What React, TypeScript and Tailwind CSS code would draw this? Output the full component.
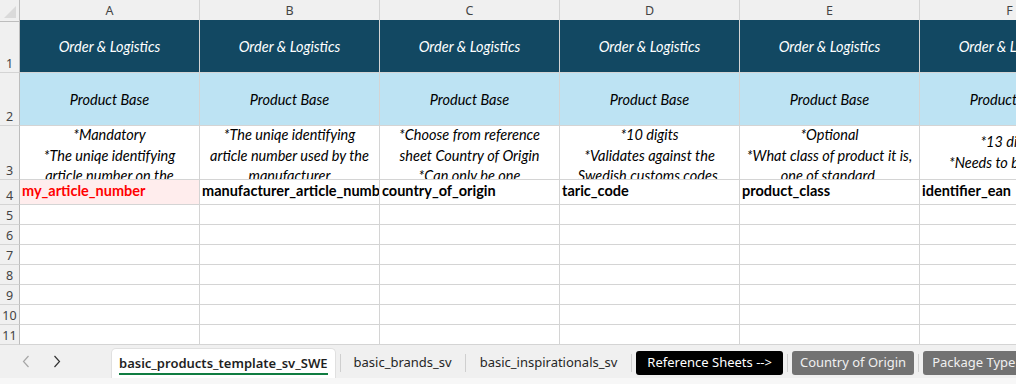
import type { ReactNode } from "react";

const cols = ["A", "B", "C", "D", "E", "F"];

const notes: { lines: string[]; top?: boolean }[] = [
  { lines: ["*Mandatory", "*The uniqe identifying", "article number on the", "supplier side"] },
  { lines: ["*The uniqe identifying", "article number used by the", "manufacturer"] },
  { lines: ["*Choose from reference", "sheet Country of Origin", "*Can only be one"] },
  { lines: ["*10 digits", "*Validates against the", "Swedish customs codes."] },
  { lines: ["*Optional", "*What class of product it is,", "one of standard."] },
  { lines: ["*13 digits", "*Needs to be unique"], top: true },
];

const fields = [
  "my_article_number",
  "manufacturer_article_number",
  "country_of_origin",
  "taric_code",
  "product_class",
  "identifier_ean",
];

const grid = "grid grid-cols-[20px_repeat(6,180px)]";
const cellFont = "font-['Lato','Liberation_Sans',sans-serif] text-[14.5px]";

function RowNum({ n, h }: { n: number; h: string }) {
  return (
    <div
      className={`${h} flex items-end justify-center border-r border-b border-r-[#bdbdbd] border-b-[#d4d4d4] bg-[#f0f0f0] font-['Noto_Sans',sans-serif] text-[12.5px] leading-[16px] text-[#444]`}
    >
      {n}
    </div>
  );
}

function Cell({ className = "", children }: { className?: string; children?: ReactNode }) {
  return <div className={`overflow-hidden border-r border-b border-[#d4d4d4] ${className}`}>{children}</div>;
}

function Sheet() {
  return (
    <div className="h-[345px] overflow-hidden bg-white">
      {/* column letters */}
      <div className={`${grid} h-[20px]`}>
        <div className="relative border-r border-b border-[#bdbdbd] bg-[#f0f0f0]">
          <div className="absolute right-[3px] bottom-[3px] h-0 w-0 border-b-[12px] border-l-[12px] border-b-[#dadada] border-l-transparent" />
        </div>
        {cols.map((c) => (
          <div
            key={c}
            className="flex items-center justify-center border-r border-b border-r-[#d4d4d4] border-b-[#bdbdbd] bg-[#f0f0f0] pt-[2px] font-['Noto_Sans',sans-serif] text-[12.5px] text-[#444]"
          >
            {c}
          </div>
        ))}
      </div>

      {/* row 1 */}
      <div className={`${grid} h-[53px]`}>
        <RowNum n={1} h="h-[53px]" />
        {cols.map((c) => (
          <Cell key={c} className={`flex items-center justify-center bg-[#124862] pt-[2px] italic text-white ${cellFont}`}>
            <span className="whitespace-nowrap">Order &amp; Logistics</span>
          </Cell>
        ))}
      </div>

      {/* row 2 */}
      <div className={`${grid} h-[53px]`}>
        <RowNum n={2} h="h-[53px]" />
        {cols.map((c) => (
          <Cell key={c} className={`flex items-center justify-center bg-[#bde3f3] pt-[2px] italic text-black ${cellFont}`}>
            <span className="whitespace-nowrap">Product Base</span>
          </Cell>
        ))}
      </div>

      {/* row 3 */}
      <div className={`${grid} h-[54px]`}>
        <RowNum n={3} h="h-[54px]" />
        {notes.map((n, i) => (
          <Cell key={i} className={`italic text-black ${cellFont}`}>
            <div className={`${n.top ? "pt-[6px]" : "-mt-[1px]"} text-center leading-[20.5px] whitespace-nowrap`}>
              {n.lines.map((l) => (
                <div key={l}>{l}</div>
              ))}
            </div>
          </Cell>
        ))}
      </div>

      {/* row 4 */}
      <div className={`${grid} h-[25px]`}>
        <RowNum n={4} h="h-[25px]" />
        {fields.map((f, i) => (
          <Cell
            key={f}
            className={`${i === 0 ? "bg-[#ffeded] text-[#ff0000]" : "text-black"} pt-[1px] pl-[2px] leading-[20px] font-bold whitespace-nowrap ${cellFont}`}
          >
            {f}
          </Cell>
        ))}
      </div>

      {[5, 6, 7, 8, 9, 10, 11].map((n) => (
        <div key={n} className={`${grid} h-[20px]`}>
          <RowNum n={n} h="h-[20px]" />
          {cols.map((c) => (
            <Cell key={c} />
          ))}
        </div>
      ))}
    </div>
  );
}

function Sep() {
  return <div className="mx-[4px] h-[18px] w-px bg-[#cfcfcf]" />;
}

function Tabs() {
  const tabFont = "font-['Noto_Sans','Open_Sans',sans-serif] text-[13px] whitespace-nowrap";
  return (
    <div className="flex h-[39px] flex-col bg-[#f0f0f0]">
      <div className="flex h-[33px] items-end">
        <div className="flex h-[33px] w-[111px] shrink-0 items-center gap-[23px] pl-[22px]">
          <svg width="8" height="13" viewBox="0 0 8 13" fill="none" stroke="#a6a6a6" strokeWidth="1.2">
            <path d="M6.5 1 1.5 6.5l5 5.5" />
          </svg>
          <svg width="8" height="13" viewBox="0 0 8 13" fill="none" stroke="#333" strokeWidth="1.2">
            <path d="M1.5 1 6.5 6.5l-5 5.5" />
          </svg>
        </div>
        <div className="flex h-[30px] shrink-0 flex-col items-center rounded-t-[5px] border border-b-0 border-[#e0e0e0] bg-white px-[7px]">
          <div className={`${tabFont} pt-[6px] leading-[17px] font-semibold text-[#1f1f1f]`}>
            basic_products_template_sv_SWE
          </div>
          <div className="mt-[1px] h-[2px] w-full bg-[#107c41]" />
        </div>
        <div className="flex h-[30px] items-center">
          <Sep />
          <div className={`${tabFont} px-[9px] text-[#262626]`}>basic_brands_sv</div>
          <Sep />
          <div className={`${tabFont} px-[10px] text-[#262626]`}>basic_inspirationals_sv</div>
          <Sep />
          <div className={`${tabFont} flex h-[24px] items-center rounded-[3px] bg-black px-[11px] text-white`}>
            Reference Sheets --&gt;
          </div>
          <Sep />
          <div className={`${tabFont} flex h-[24px] items-center rounded-[3px] bg-[#727272] px-[8px] text-[#f0f0f0]`}>
            Country of Origin
          </div>
          <Sep />
          <div className={`${tabFont} flex h-[24px] items-center rounded-[3px] bg-[#727272] px-[9px] text-[#f0f0f0]`}>
            Package Type
          </div>
        </div>
      </div>
      <div className="h-[6px] bg-[#f7f7f7]" />
    </div>
  );
}

export default function App() {
  return (
    <div className="h-[384px] w-[1016px] overflow-hidden bg-white">
      <Sheet />
      <Tabs />
    </div>
  );
}
